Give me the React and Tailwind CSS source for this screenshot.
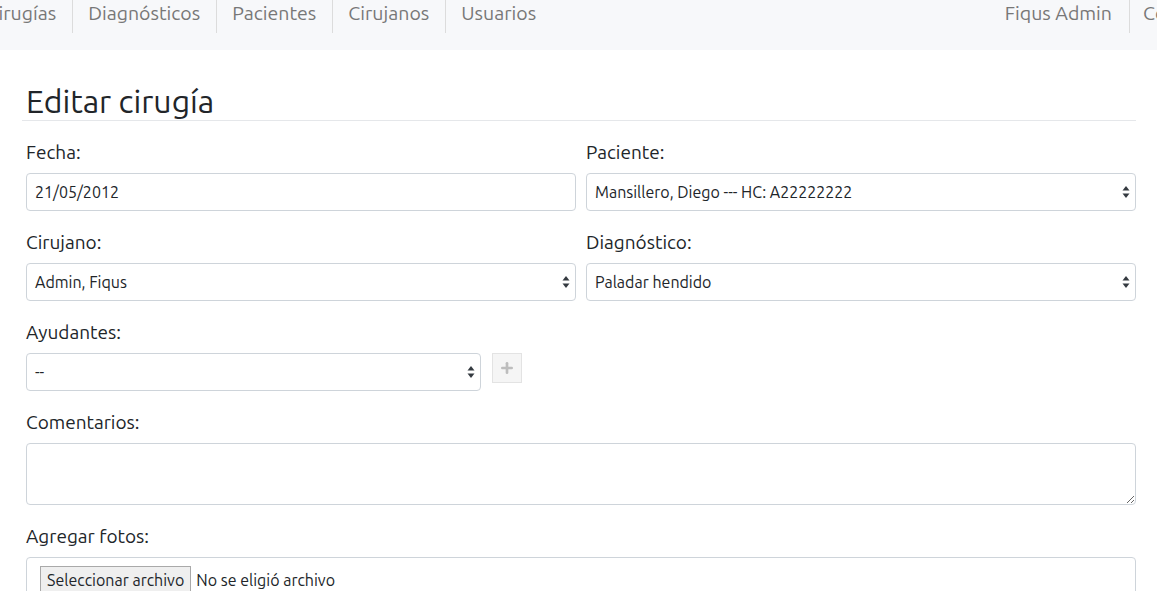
import { Plus } from "lucide-react";

const navItems = ["Cirugías", "Diagnósticos", "Pacientes", "Cirujanos", "Usuarios"];

const SelectArrows = () => (
  <svg width="8" height="13" viewBox="0 0 8 13" className="absolute right-[5px] top-1/2 -translate-y-1/2">
    <path d="M4 0.5 L7.5 5 L0.5 5 Z" fill="#343a40" />
    <path d="M4 12.5 L7.5 8 L0.5 8 Z" fill="#343a40" />
  </svg>
);

const Select = ({ value, className = "" }) => (
  <div
    className={`relative flex h-[38px] items-center rounded-[4px] border border-[#ced4da] bg-white pl-[8px] text-[16px] text-[#212529] ${className}`}
  >
    <span>{value}</span>
    <SelectArrows />
  </div>
);

const Label = ({ children }) => (
  <div className="mb-[9px] text-[19px] leading-[24px] text-[#212529]">{children}</div>
);

export default function App() {
  return (
    <div
      className="min-h-[591px] w-[1157px] overflow-hidden bg-white"
      style={{ fontFamily: "Ubuntu, 'Noto Sans', sans-serif" }}
    >
      {/* Navbar */}
      <nav className="flex h-[50px] items-start overflow-hidden bg-[#f7f8fa] text-[19.5px] leading-[26px] text-[#777]">
        <ul className="-ml-[29px] flex">
          {navItems.map((item, i) => (
            <li
              key={item}
              className={`h-[33px] whitespace-nowrap px-[15.5px] ${
                i < navItems.length - 1 ? "border-r border-[#dcdcdc]" : ""
              }`}
            >
              {item}
            </li>
          ))}
        </ul>
        <ul className="ml-auto flex">
          <li className="h-[33px] whitespace-nowrap border-r border-[#dcdcdc] pl-4 pr-[17px]">Fiqus Admin</li>
          <li className="h-[33px] w-[27px] shrink-0 whitespace-nowrap pl-[13px]">Cerrar sesión</li>
        </ul>
      </nav>

      <div className="pl-[22px] pr-[21px] pt-[32px]">
        <h1 className="border-b border-[#e5e7ea] pl-[4px] text-[32px] leading-[38px] text-[#212529]">
          Editar cirugía
        </h1>

        <div className="pl-[4px] pt-[19px]">
          <div className="grid grid-cols-2 gap-x-[10px]">
            <div>
              <Label>Fecha:</Label>
              <div className="flex h-[38px] items-center rounded-[4px] border border-[#ced4da] bg-white pl-[8px] text-[16px] text-[#212529]">
                21/05/2012
              </div>
            </div>
            <div>
              <Label>Paciente:</Label>
              <Select value="Mansillero, Diego --- HC: A22222222" />
            </div>
          </div>

          <div className="mt-[19px] grid grid-cols-2 gap-x-[10px]">
            <div>
              <Label>Cirujano:</Label>
              <Select value="Admin, Fiqus" />
            </div>
            <div>
              <Label>Diagnóstico:</Label>
              <Select value="Paladar hendido" />
            </div>
          </div>

          <div className="mt-[19px]">
            <Label>Ayudantes:</Label>
            <div className="flex items-start gap-[11px]">
              <Select value="--" className="w-[455px]" />
              <button className="flex h-[30px] w-[30px] items-center justify-center border border-[#e3e3e3] bg-[#f5f5f5]">
                <Plus size={16} strokeWidth={4} color="#bdbdbd" />
              </button>
            </div>
          </div>

          <div className="mt-[19px]">
            <Label>Comentarios:</Label>
            <textarea className="block h-[62px] w-full rounded-[4px] border border-[#ced4da] bg-white" />
          </div>

          <div className="mt-[19px]">
            <Label>Agregar fotos:</Label>
            <div className="flex h-[50px] items-start rounded-[4px] border border-[#ced4da] bg-white pl-[13px] pt-[8px] text-[16px] text-[#212529]">
              <span className="border border-[#a9a9a9] bg-[#efefef] px-[6px] py-[2px] leading-[22px]">
                Seleccionar archivo
              </span>
              <span className="ml-[5px] pt-[3px] leading-[22px]">No se eligió archivo</span>
            </div>
          </div>
        </div>
      </div>
    </div>
  );
}
